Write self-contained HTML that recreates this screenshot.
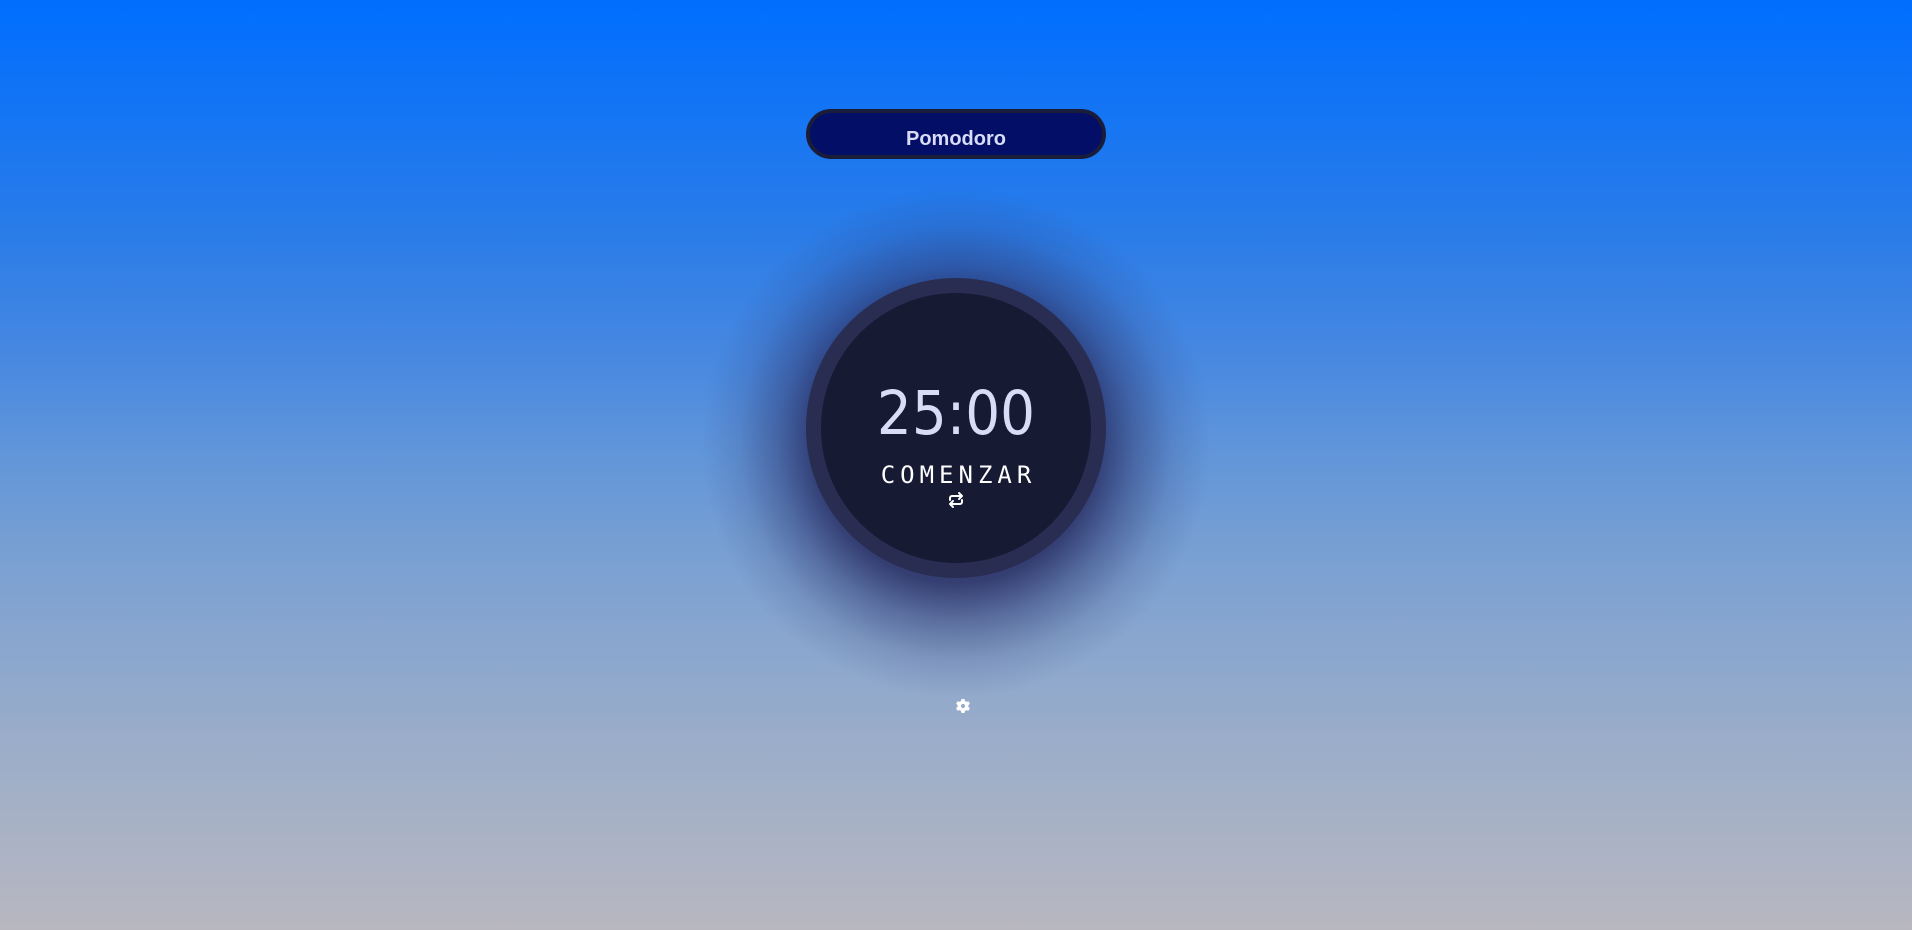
<!DOCTYPE html>
<html><head><style>
html,body{margin:0;padding:0;width:1912px;height:930px;overflow:hidden}
body{background:linear-gradient(to bottom,#006eff 0%,#2a7ce8 25%,#4b8ae0 40%,#5d94db 47%,#7aa0d2 60%,#98acca 78%,#b8b7c0 100%);position:relative;font-family:"Liberation Sans",sans-serif}
.pill{position:absolute;left:806px;top:109px;width:300px;height:50px;box-sizing:border-box;border:4px solid #1a1d3a;border-radius:25px;background:#030e67;color:#d8dcf7;font-weight:bold;font-size:20px;text-align:center;line-height:42px;padding-top:5px}
.glow{position:absolute;left:701px;top:188px;width:510px;height:510px;background:radial-gradient(circle closest-side at 50% 50%,rgba(35,38,90,0.9) 0%,rgba(35,38,90,0.8) 55%,rgba(40,45,100,0.45) 70%,rgba(40,45,100,0.15) 85%,rgba(40,45,100,0) 100%)}
.circle{position:absolute;left:806px;top:278px;width:300px;height:300px;box-sizing:border-box;border-radius:50%;background:#161a33;border:15px solid #2a2d52}
.time{position:absolute;left:0;width:100%;top:91px;text-align:center;font-family:"DejaVu Sans",sans-serif;font-size:61px;color:#d8dcf7;line-height:60px;transform:scaleX(0.9)}
.start{position:absolute;left:0;width:100%;top:167px;text-align:center;font-family:"DejaVu Sans Mono","Liberation Mono",monospace;font-size:24px;letter-spacing:5px;padding-left:5px;box-sizing:border-box;color:#fff;line-height:30px}
.rep{position:absolute;left:126px;top:198px}
.gear{position:absolute;left:955px;top:698px}
</style></head><body>
<div class="pill">Pomodoro</div>
<div class="glow"></div>
<div class="circle">
<div class="time">25:00</div>
<div class="start">COMENZAR</div>
<svg class="rep" width="18" height="18" viewBox="0 0 18 18" fill="none" stroke="#fff" stroke-width="2" stroke-linecap="round" stroke-linejoin="round"><path d="M3 9V7a2 2 0 0 1 2-2h10M12 2l3 3-3 3"/><path d="M15 9v2a2 2 0 0 1-2 2H3M6 16l-3-3 3-3"/></svg>
</div>
<svg class="gear" width="16" height="16" viewBox="0 0 16 16"><path fill="#fff" fill-rule="evenodd" d="M6.5 1h3l.4 2 1.6.9 1.9-.7 1.5 2.6-1.5 1.3v1.8l1.5 1.3-1.5 2.6-1.9-.7-1.6.9-.4 2h-3l-.4-2-1.6-.9-1.9.7L1.1 10.2l1.5-1.3V7.1L1.1 5.8l1.5-2.6 1.9.7 1.6-.9zM8 6a2 2 0 1 0 0 4 2 2 0 1 0 0-4z"/></svg>
</body></html>
